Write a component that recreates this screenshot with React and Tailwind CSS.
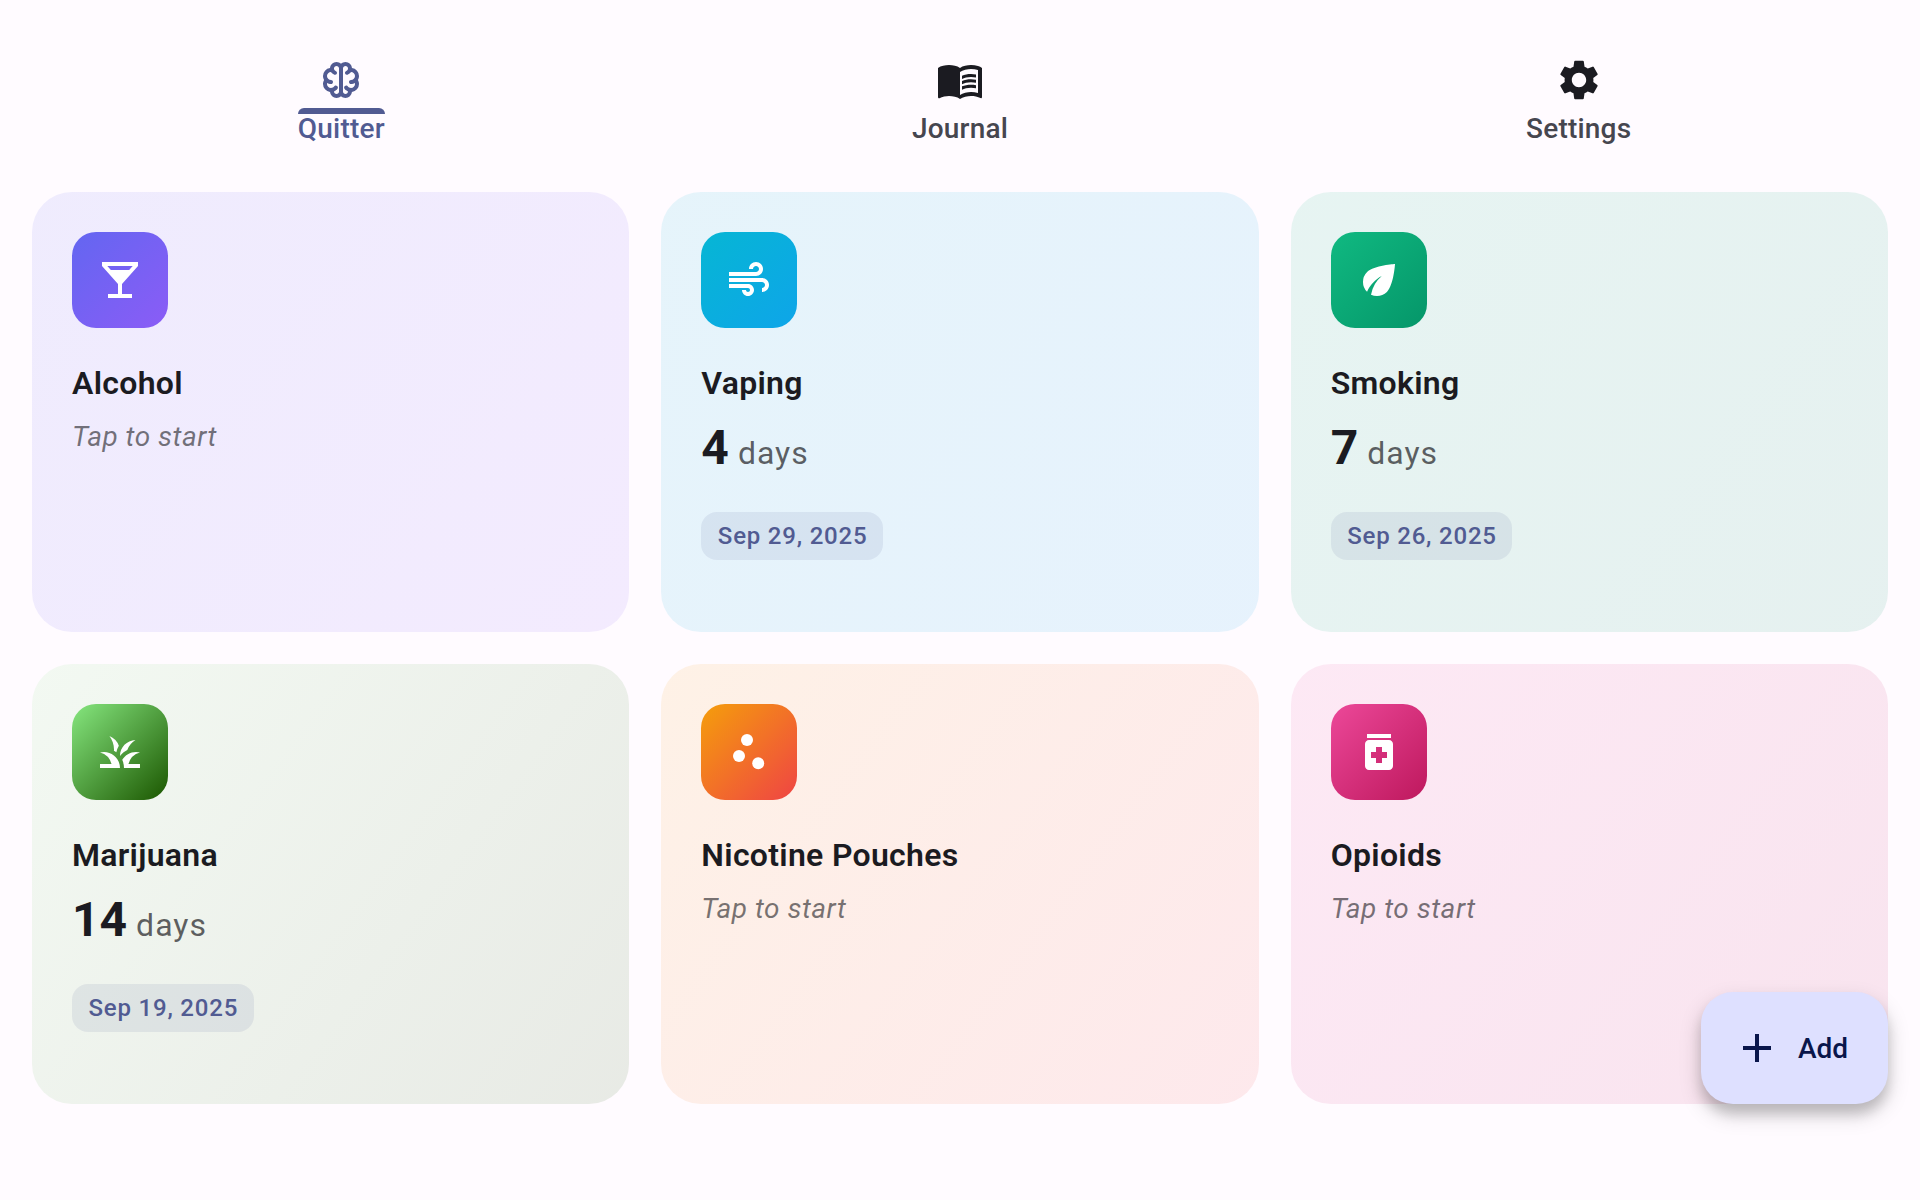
import { MdMenuBook, MdSettings, MdLocalBar, MdAir, MdEco, MdGrass, MdScatterPlot, MdMedication, MdAdd } from "react-icons/md";

function BrainIcon({ className }) {
  return (
    <svg viewBox="0 -960 960 960" className={className} fill="currentColor">
      <path d="M390-120q-51 0-88-35.5T260-241q-60-8-100-53t-40-106q0-21 5.500-41.500T142-480q-11-18-16.500-38t-5.500-42q0-61 40-105.500t99-52.500q3-51 41-86.500t90-35.500q26 0 48.500 10t41.500 27q18-17 41-27t49-10q52 0 89.500 35t40.500 86q59 8 99.500 53T840-560q0 22-5.500 42T818-480q11 18 16.500 38.500T840-400q0 62-40.500 106.500T699-241q-5 50-41.500 85.500T570-120q-25 0-48.500-9.500T480-156q-19 17-42 26.500t-48 9.500Zm130-590v460q0 21 14.500 35.500T570-200q20 0 34.500-16t15.500-36q-21-8-38.500-21.500T550-306q-10-14-7.500-30t16.500-26q14-10 30-7.500t26 16.500q11 16 28 24.500t37 8.500q33 0 56.500-23.500T760-400q0-5-.5-10t-2.500-10q-17 10-36.500 15t-40.500 5q-17 0-28.500-11.500T640-440q0-17 11.500-28.500T680-480q33 0 56.500-23.500T760-560q0-33-23.500-56T680-640q-11 18-28.500 31.500T613-587q-16 6-31-1t-20-23q-5-16 1.500-31t22.500-20q15-5 24.500-18t9.500-30q0-21-14.500-35.500T570-760q-21 0-35.500 14.500T520-710Zm-80 460v-460q0-21-14.500-35.500T390-760q-21 0-35.500 14.500T340-710q0 16 9 29.500t24 18.500q16 5 23 20t2 31q-6 16-21 23t-31 1q-21-8-38.500-21.500T279-640q-32 1-55.500 24.500T200-560q0 33 23.500 56.500T280-480q17 0 28.500 11.500T320-440q0 17-11.500 28.500T280-400q-21 0-40.500-5T203-420q-2 5-2.500 10t-.5 10q0 33 23.500 56.500T280-320q20 0 37-8.500t28-24.500q10-14 26-16.500t30 7.500q14 10 16.500 26t-7.500 30q-14 19-32 33t-39 22q1 20 16 35.500t35 15.500q21 0 35.500-14.500T440-250Z" />
    </svg>
  );
}

const tabs = [
  { label: "Quitter", Icon: BrainIcon, active: true },
  { label: "Journal", Icon: MdMenuBook },
  { label: "Settings", Icon: MdSettings },
];

const cards = [
  {
    name: "Alcohol",
    Icon: MdLocalBar,
    card: "bg-[linear-gradient(126.4deg,#6366f11a,#8b5cf61a)]",
    tile: "bg-[linear-gradient(135deg,#6366f1,#8b5cf6)]",
  },
  {
    name: "Vaping",
    Icon: MdAir,
    days: 4,
    date: "Sep 29, 2025",
    card: "bg-[linear-gradient(126.4deg,#06b6d41a,#0ea5e91a)]",
    tile: "bg-[linear-gradient(135deg,#06b6d4,#0ea5e9)]",
  },
  {
    name: "Smoking",
    Icon: MdEco,
    days: 7,
    date: "Sep 26, 2025",
    card: "bg-[linear-gradient(126.4deg,#10b9811a,#0596691a)]",
    tile: "bg-[linear-gradient(135deg,#10b981,#059669)]",
  },
  {
    name: "Marijuana",
    Icon: MdGrass,
    days: 14,
    date: "Sep 19, 2025",
    card: "bg-[linear-gradient(126.4deg,#86e77f1a,#1b56001a)]",
    tile: "bg-[linear-gradient(135deg,#86e77f,#1b5600)]",
  },
  {
    name: "Nicotine Pouches",
    Icon: MdScatterPlot,
    card: "bg-[linear-gradient(126.4deg,#f59e0b1a,#ef44441a)]",
    tile: "bg-[linear-gradient(135deg,#f59e0b,#ef4444)]",
  },
  {
    name: "Opioids",
    Icon: MdMedication,
    card: "bg-[linear-gradient(126.4deg,#ec48991a,#be185d1a)]",
    tile: "bg-[linear-gradient(135deg,#ec4899,#be185d)]",
  },
];

function Tab({ label, Icon, active }) {
  return (
    <button className={`flex flex-col items-center ${active ? "text-[#515b92]" : "text-[#1b1b21]"}`}>
      <Icon className="size-12" />
      <span className={`mt-1 h-1.5 w-[87px] rounded-t-md ${active ? "bg-[#515b92]" : ""}`} />
      <span className={`text-[28px] leading-[30px] font-medium tracking-[0.2px] ${active ? "" : "text-[#46464f]"}`}>{label}</span>
    </button>
  );
}

function Card({ name, Icon, days, date, card, tile }) {
  return (
    <article className={`flex h-[440px] flex-col items-start rounded-[40px] p-10 ${card}`}>
      <div className={`flex size-24 items-center justify-center rounded-3xl text-white ${tile}`}>
        <Icon className="size-12" />
      </div>
      <h2 className="mt-[31px] text-[32px] leading-[48px] font-semibold tracking-[0.3px] text-[#1b1b21]">{name}</h2>
      {days ? (
        <>
          <p className="mt-[9px] flex items-baseline leading-[64px] text-[#1b1b21]">
            <span className="text-[48px] font-bold">{days}</span>
            <span className="ml-[9px] text-[32px] tracking-[1px] text-[#1b1b21]/70">days</span>
          </p>
          <span className="mt-[27px] rounded-2xl bg-[#515b92]/10 pr-[15.5px] pl-[16.5px] text-[24px] leading-[48px] font-medium tracking-[0.8px] text-[#515b92]">{date}</span>
        </>
      ) : (
        <p className="mt-2.5 text-[28px] leading-10 tracking-[0.5px] text-[#1b1b21]/60 italic">Tap to start</p>
      )}
    </article>
  );
}

export default function App() {
  return (
    <div className="h-[1200px] w-[1920px] overflow-hidden bg-[#fffbff] font-['Roboto',sans-serif]">
      <nav className="grid h-48 grid-cols-3 items-start px-8 pt-14">
        {tabs.map((t) => (
          <Tab key={t.label} {...t} />
        ))}
      </nav>
      <main className="grid grid-cols-3 gap-8 px-8">
        {cards.map((c) => (
          <Card key={c.name} {...c} />
        ))}
      </main>
      <button className="absolute top-[992px] left-[1701px] flex h-28 w-[187px] items-center gap-4 rounded-[32px] bg-[#dee0ff] pl-8 text-[#09164b] shadow-[0_10px_12px_rgba(0,0,0,0.14),0_10px_22px_rgba(0,0,0,0.18)]">
        <MdAdd className="size-12" />
        <span className="pt-0.5 pl-px text-[28px] leading-10 font-medium">Add</span>
      </button>
    </div>
  );
}
